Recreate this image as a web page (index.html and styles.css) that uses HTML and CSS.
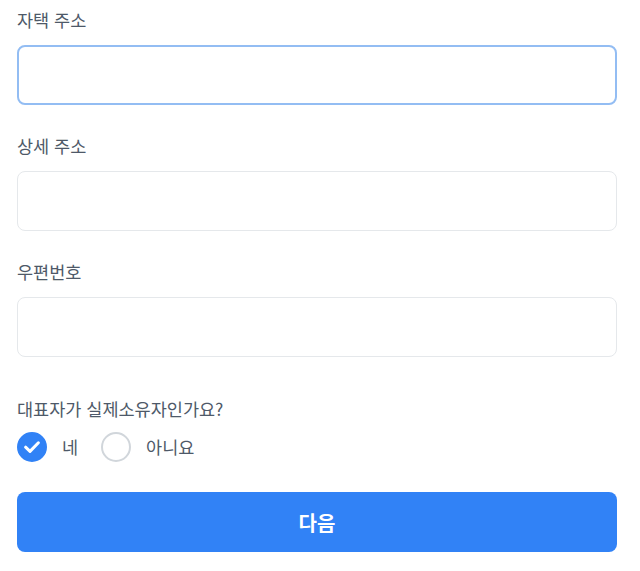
FILE: index.html
```html
<!DOCTYPE html>
<html lang="ko">
<head>
<meta charset="utf-8">
<link rel="stylesheet" href="styles.css">
</head>
<body>
<form class="form">
  <div class="field">
    <label class="label">자택 주소</label>
    <input class="input input-focus" type="text">
  </div>
  <div class="field">
    <label class="label">상세 주소</label>
    <input class="input" type="text">
  </div>
  <div class="field field-last">
    <label class="label">우편번호</label>
    <input class="input" type="text">
  </div>
  <div class="question">
    <div class="label q-label">대표자가 실제소유자인가요?</div>
    <div class="options">
      <span class="option">
        <span class="circle circle-on">
          <svg width="20" height="20" viewBox="0 0 20 20"><path d="M3.6 10.2 L8 14.4 L16.4 5.8" fill="none" stroke="#fff" stroke-width="3" stroke-linecap="round" stroke-linejoin="round"/></svg>
        </span>
        <span class="opt-text">네</span>
      </span>
      <span class="option">
        <span class="circle"></span>
        <span class="opt-text">아니요</span>
      </span>
    </div>
  </div>
  <button type="button" class="btn">다음</button>
</form>
</body>
</html>
```

FILE: styles.css
```css
* { box-sizing: border-box; }
body {
  margin: 0;
  background: #fff;
  font-family: "Noto Sans CJK KR", "Noto Sans", sans-serif;
}
.form {
  width: 600px;
  margin-left: 17px;
  padding-top: 8px;
}
.field {
  display: flex;
  flex-direction: column;
  margin-bottom: 29px;
}
.field-last { margin-bottom: 40px; }
.label {
  font-size: 17.5px;
  line-height: 24px;
  color: #4e5968;
  margin-bottom: 13px;
}
.input {
  height: 60px;
  width: 100%;
  border: 1px solid #e5e8eb;
  border-radius: 8px;
  background: #fff;
  outline: none;
  font-size: 17px;
  padding: 0 16px;
}
.input-focus {
  border: 2px solid #93bdf3;
}
.q-label { margin-bottom: 11px; }
.options {
  display: flex;
  align-items: center;
  gap: 23px;
}
.option {
  display: flex;
  align-items: center;
  gap: 15px;
}
.circle {
  width: 30px;
  height: 30px;
  border-radius: 50%;
  border: 2px solid #d1d6db;
  display: flex;
  align-items: center;
  justify-content: center;
}
.circle-on {
  background: #3182f6;
  border-color: #3182f6;
}
.opt-text {
  font-size: 17.5px;
  line-height: 24px;
  color: #4e5968;
}
.btn {
  display: block;
  width: 100%;
  height: 60px;
  margin-top: 30px;
  border: none;
  border-radius: 8px;
  background: #3182f6;
  color: #fff;
  font-family: "Noto Sans CJK KR", "Noto Sans", sans-serif;
  font-size: 20px;
  font-weight: 700;
}
```
